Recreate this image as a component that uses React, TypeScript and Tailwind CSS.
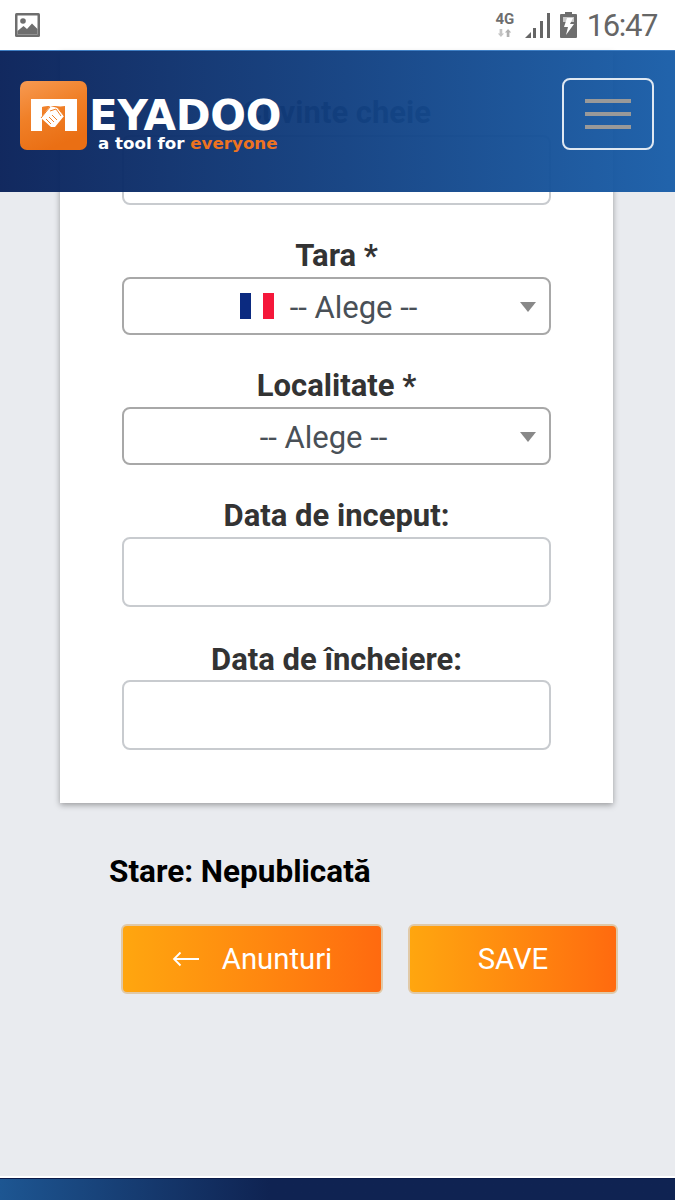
const roboto = "font-['Roboto',sans-serif]";

function Flag() {
  return (
    <span className="flex h-[26px] w-[34px] shrink-0">
      <span className="h-full w-[11px] bg-[#0b2a80]" />
      <span className="h-full w-[12px] bg-white" />
      <span className="h-full w-[11px] bg-[#f5173a]" />
    </span>
  );
}

function Select({ flag, padding }: { flag?: boolean; padding: string }) {
  return (
    <div className={`relative flex h-[58px] w-full items-center justify-center rounded-[8px] border-2 border-[#a8a8a8] bg-white ${padding}`}>
      {flag && <Flag />}
      <span className={`mt-[2px] text-[31px] leading-none text-[#495057] ${flag ? "ml-[16px]" : ""}`}>-- Alege --</span>
      <span className="absolute right-[13px] top-[23px] h-0 w-0 border-x-[8px] border-t-[10px] border-x-transparent border-t-[#888888]" />
    </div>
  );
}

function Label({ children }: { children: string }) {
  return <div className="text-center text-[31px] font-bold leading-[36px] text-[#333333]">{children}</div>;
}

function Field({ label, className, gap }: { label: string; className: string; gap: string }) {
  return (
    <div className={`flex flex-col ${gap} ${className}`}>
      <Label>{label}</Label>
      <input className="h-[70px] w-full rounded-[8px] border-2 border-[#c8cbcf] bg-white" />
    </div>
  );
}

function StatusBar() {
  return (
    <div className="flex h-[50px] items-center justify-between bg-white pl-[15px] pr-[18px]">
      <svg width="25" height="25" viewBox="0 0 25 25">
        <rect width="25" height="24" rx="1.5" fill="#6e6e6e" />
        <rect x="2.5" y="2.5" width="20" height="19" fill="#fff" />
        <circle cx="8" cy="8" r="2.8" fill="#6e6e6e" />
        <path d="M2.5 21.5 V18 L8.5 13 L12 16 L17 10.500 L22.500 16 V21.500 Z" fill="#6e6e6e" />
      </svg>
      <div className="flex items-center text-[#666666]">
        <div className="flex w-[20px] flex-col items-center">
          <span className="text-[15px] font-bold leading-[13px] text-[#6e6e6e]">4G</span>
          <svg width="15" height="8" viewBox="0 0 15 9" className="mt-[3px]">
            <path d="M2 0h3v5h2L3.500 9 0 5h2z" fill="#c4c4c4" />
            <path d="M11.500 0 15 4h-2v5h-3V4H8z" fill="#b0b0b0" />
          </svg>
        </div>
        <svg width="26" height="25" viewBox="0 0 26 25" className="ml-[10px]">
          <path d="M0 25 L6 19 V25 Z" fill="#666" />
          <rect x="8" y="15" width="3" height="10" fill="#666" />
          <rect x="15" y="8" width="3" height="17" fill="#666" />
          <rect x="22" y="0" width="3" height="25" fill="#666" />
        </svg>
        <svg width="17" height="26" viewBox="0 0 17 26" className="ml-[9px]">
          <path d="M5 0h7v2h4a1 1 0 0 1 1 1v22a1 1 0 0 1-1 1H1a1 1 0 0 1-1-1V3a1 1 0 0 1 1-1h4z" fill="#6e6e6e" />
          <rect x="3" y="5" width="11" height="5" fill="#c9c9c9" />
          <path d="M7 6h6l-3 6h4L6 23l2-8H4z" fill="#fff" />
        </svg>
        <span className={`ml-[10px] text-[31px] leading-none tracking-[-1.4px] text-[#666666] ${roboto}`}>16:47</span>
      </div>
    </div>
  );
}

function LogoMark() {
  return (
    <svg width="67" height="69" viewBox="0 0 67 69" className="shrink-0">
      <defs>
        <linearGradient id="logoBg" x1="0" y1="0" x2="0.4" y2="1">
          <stop offset="0" stopColor="#f79a52" />
          <stop offset="0.5" stopColor="#f08028" />
          <stop offset="1" stopColor="#ea6f14" />
        </linearGradient>
      </defs>
      <rect width="67" height="69" rx="7" fill="url(#logoBg)" />
      <rect x="11" y="18" width="11" height="32" fill="#fff" />
      <rect x="45" y="18" width="12" height="32" fill="#fff" />
      <path d="M22 18h23v7c-5 1-9 0-15 0-3 0-6 0-8 1z" fill="#fff" />
      <path d="M21 37 L30 25 L38 27 L44 35 L35 46 L31 46 Z" fill="#fff" />
      <path d="M21 37 L30 26 M44 35 L37 26 M30 30 L36 28 L41 35 M26 38 L31 43 M29 36 L34 41 M32 34 L37 39" stroke="#f08028" strokeWidth="1" fill="none" />
    </svg>
  );
}

function Logo() {
  return (
    <div className="flex items-start">
      <LogoMark />
      <div className="ml-[2px] flex flex-col font-['DejaVu_Sans',sans-serif] font-bold">
        <span className="mt-[14px] text-[42px] leading-[42px] tracking-[-0.3px] text-white">EYADOO</span>
        <span className="-mt-[3px] ml-[9px] whitespace-nowrap text-[16.700px] leading-[18px] text-white">
          a tool for <span className="text-[#ed7320]">everyone</span>
        </span>
      </div>
    </div>
  );
}

function Header() {
  return (
    <div className="absolute inset-x-0 top-[50px] z-10 flex h-[142px] items-start justify-between border-t border-[#3f7fc4] bg-gradient-to-r from-[rgba(9,33,89,0.96)] to-[rgba(25,94,169,0.96)] pl-[20px] pr-[21px]">
      <div className="mt-[30px]">
        <Logo />
      </div>
      <div className="mt-[27px] flex h-[72px] w-[92px] flex-col items-center justify-center gap-[9px] rounded-[8px] border-2 border-[#dfe8f2]">
        <span className="h-[4px] w-[46px] bg-[#999999]" />
        <span className="h-[4px] w-[46px] bg-[#999999]" />
        <span className="h-[4px] w-[46px] bg-[#999999]" />
      </div>
    </div>
  );
}

export default function App() {
  return (
    <div className={`relative flex h-[1200px] w-[675px] flex-col overflow-hidden bg-[#e9ebef] ${roboto}`}>
      <StatusBar />
      <Header />
      <main className="flex flex-1 flex-col">
        <div className="ml-[60px] mt-[2px] h-[751px] w-[553px] bg-white px-[62px] pt-[43px] shadow-[0_2px_6px_rgba(0,0,0,0.35)]">
          <Label>Cuvinte cheie</Label>
          <div className="mt-[4px] h-[70px] rounded-[8px] border-2 border-[#c8cbcf]" />
          <div className="mt-[33px]">
            <Label>Tara *</Label>
            <div className="mt-[3px]">
              <Select flag padding="pr-[16px]" />
            </div>
          </div>
          <div className="mt-[33px]">
            <Label>Localitate *</Label>
            <div className="mt-[3px]">
              <Select padding="pr-[26px]" />
            </div>
          </div>
          <Field label="Data de inceput:" className="mt-[33px]" gap="gap-[3px]" />
          <Field label="Data de încheiere:" className="mt-[35px]" gap="gap-[2px]" />
        </div>
        <div className="ml-[109px] mt-[51px] text-[31.500px] font-bold leading-[36px] text-black">Stare: Nepublicată</div>
        <div className="ml-[121px] mt-[34px] flex gap-[25px]">
          <button className="flex h-[70px] w-[262px] items-center justify-center rounded-[6px] border-2 border-[#e0c9a8] bg-gradient-to-r from-[#ffa60f] to-[#ff6a0f] pt-[2px] text-[29.300px] text-white">
            <svg width="28" height="16" viewBox="0 0 28 16" className="mr-[22px] -mt-[2px]">
              <path d="M27 8H2M8.500 1.500 2 8l6.500 6.500" stroke="#fff" strokeWidth="1.800" fill="none" />
            </svg>
            Anunturi
          </button>
          <button className="flex h-[70px] w-[210px] items-center justify-center rounded-[6px] border-2 border-[#e0c9a8] bg-gradient-to-r from-[#ffa60f] to-[#ff6a0f] pt-[2px] text-[29.300px] text-white">
            SAVE
          </button>
        </div>
        <footer className="mt-auto h-[24px] border-t-2 border-white bg-gradient-to-r from-[#1d5692] via-[#0f2352] via-40% to-[#0f2352] shadow-[inset_0_1px_0_#0a1a48]" />
      </main>
    </div>
  );
}
